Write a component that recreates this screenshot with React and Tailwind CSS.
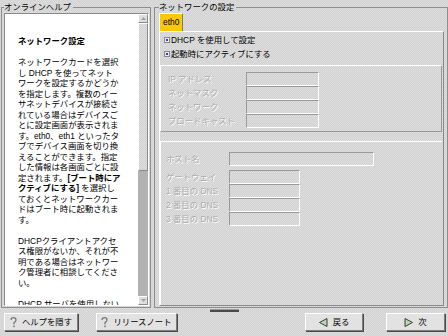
const helpLines1 = [
  'ネットワークカードを選択',
  'し DHCP を使ってネット',
  'ワークを設定するかどうか',
  'を指定します。複数のイー',
  'サネットデバイスが接続さ',
  'れている場合はデバイスご',
  'とに設定画面が表示されま',
  'す。eth0、eth1 といったタ',
  'ブでデバイス画面を切り換',
  'えることができます。指定',
  'した情報は各画面ごとに設',
];

const helpLines2 = [
  'ておくとネットワークカー',
  'ドはブート時に起動されま',
  'す。',
];

const helpLines3 = [
  'DHCPクライアントアクセ',
  'ス権限がないか、それが不',
  '明である場合はネットワー',
  'ク管理者に相談してくださ',
  'い。',
];

const stipple = 'bg-[repeating-conic-gradient(#d2d2d2_0%_25%,#dddddd_0%_50%)] bg-[length:2px_2px]';

function HelpIcon() {
  return (
    <svg width="7" height="11" viewBox="0 0 7 11">
      <path d="M1 3 Q1 0.7 3.5 0.7 Q6 0.7 6 3 Q6 4.6 4 5.6 L4 7.5" fill="none" stroke="#7a7a7a" strokeWidth="1.3" />
      <rect x="3.2" y="8.6" width="1.6" height="1.6" fill="#7a7a7a" />
    </svg>
  );
}

function Arrow({ dir }) {
  return (
    <svg width="9" height="9" viewBox="0 0 9 9">
      <polygon
        points={dir === 'left' ? '8,0.5 8,8.5 0.5,4.5' : '1,0.5 1,8.5 8.5,4.5'}
        fill="#b8d8b0"
        stroke="#3c3c3c"
        strokeWidth="1"
      />
    </svg>
  );
}

function Button({ children, className }) {
  return (
    <button className={`h-[18px] flex items-center justify-center gap-[5px] bg-[#e2e2e2] border border-t-white border-l-white border-b-[#7c7c7c] border-r-[#7c7c7c] shadow-[1px_1px_0_#4a4a4a] text-black ${className}`}>
      {children}
    </button>
  );
}

function Check({ label }) {
  return (
    <div className="h-[14px] flex items-center gap-[1px] pl-[4px]">
      <span className="w-[6px] h-[6px] border border-[#8a8a8a] bg-[#e8e8f4] flex items-center justify-center">
        <span className="w-[2px] h-[2px] bg-[#2c44b8]" />
      </span>
      <span className="text-black">{label}</span>
    </div>
  );
}

function Field({ label, w, labelW }) {
  return (
    <div className="h-[14px] flex items-center">
      <span className={`${labelW} text-[#adadad] [text-shadow:1px_1px_0_#fff] whitespace-nowrap`}>{label}</span>
      <span className={`${w} h-[14px] border border-t-[#9a9a9a] border-l-[#9a9a9a] border-b-white border-r-white`} />
    </div>
  );
}

export default function App() {
  return (
    <div className={`w-[448px] h-[336px] overflow-hidden flex flex-col text-[8.4px] leading-[10.5px] font-[family-name:'Liberation_Sans','Noto_Sans_CJK_JP',sans-serif] ${stipple}`}>
      <div className="flex gap-[3px] pl-[1px]">
        {/* オンラインヘルプ */}
        <fieldset className="mt-[1px] w-[148px] h-[307px] border border-[#8e8e8e] pl-[2px] pr-[1px] pb-[1px] flex flex-col">
          <legend className="leading-[12px] pr-[2px] text-black">オンラインヘルプ</legend>
          <div className="h-[293px] flex border border-t-[#8a8a8a] border-l-[#8a8a8a] border-b-white border-r-white">
            <div className="w-[133px] bg-white overflow-hidden pl-[13px] pt-[22px] text-black whitespace-nowrap">
              <div className="font-bold">ネットワーク設定</div>
              <div className="h-[10.5px]" />
              {helpLines1.map((l) => <div key={l}>{l}</div>)}
              <div>定されます。<b>[ブート時にア</b></div>
              <div><b>クティブにする]</b> を選択し</div>
              {helpLines2.map((l) => <div key={l}>{l}</div>)}
              <div className="h-[10.5px]" />
              {helpLines3.map((l) => <div key={l}>{l}</div>)}
              <div className="h-[10.5px]" />
              <div>DHCP サーバを使用しない</div>
              <div>場合は静的に情報を入力</div>
            </div>
            <div className="w-[10px] flex flex-col bg-[#b2b2b2]">
              <div className="h-[9px] bg-[#dedede] border border-t-white border-l-white border-b-[#8a8a8a] border-r-[#8a8a8a] flex items-center justify-center">
                <svg width="5" height="3" viewBox="0 0 5 3"><polygon points="2.5,0 5,3 0,3" fill="#a0a0a0" /></svg>
              </div>
              <div className={`h-[148px] border border-t-white border-l-white border-b-[#8a8a8a] border-r-[#8a8a8a] ${stipple}`} />
              <div className="flex-1" />
              <div className="h-[9px] bg-[#dedede] border border-t-white border-l-white border-b-[#8a8a8a] border-r-[#8a8a8a] flex items-center justify-center">
                <svg width="5" height="3" viewBox="0 0 5 3"><polygon points="0,0 5,0 2.5,3" fill="#a0a0a0" /></svg>
              </div>
            </div>
          </div>
        </fieldset>

        {/* ネットワークの設定 */}
        <fieldset className="mt-[1px] w-[294px] h-[307px] border border-[#8e8e8e] pl-[4px] pr-[3px] pb-[1px] flex flex-col">
          <legend className="leading-[12px] pr-[2px] text-black">ネットワークの設定</legend>
          <div className="flex">
            <div className="w-[24px] h-[18px] bg-[#fcc800] border border-t-white border-l-white border-r-[#7c7c7c] border-b-0 pl-[3px] flex items-center text-black">eth0</div>
          </div>
          <div className="flex-1 flex flex-col border border-t-white border-l-white border-r-[#8a8a8a] border-b-[#8a8a8a] pt-[1px]">
            <Check label="DHCP を使用して設定" />
            <Check label="起動時にアクティブにする" />
            <div className="mt-[4px] mr-[1px] h-[67px] border border-t-white border-l-white border-b-[#9a9a9a] border-r-[#9a9a9a] pl-[7px] pt-[6px] flex flex-col">
              <Field label="IP アドレス" labelW="w-[78px]" w="w-[73px]" />
              <Field label="ネットマスク" labelW="w-[78px]" w="w-[73px]" />
              <Field label="ネットワーク" labelW="w-[78px]" w="w-[73px]" />
              <Field label="ブロードキャスト" labelW="w-[78px]" w="w-[73px]" />
            </div>
            <div className="mt-[9px] mr-[1px] flex-1 border-t border-l border-t-white border-l-white pl-[5px] pt-[10px] flex flex-col">
              <Field label="ホスト名" labelW="w-[63px]" w="w-[145px]" />
              <div className="h-[4px]" />
              <Field label="ゲートウェイ" labelW="w-[63px]" w="w-[71px]" />
              <Field label="1 番目の DNS" labelW="w-[63px]" w="w-[71px]" />
              <Field label="2 番目の DNS" labelW="w-[63px]" w="w-[71px]" />
              <Field label="3 番目の DNS" labelW="w-[63px]" w="w-[71px]" />
            </div>
          </div>
        </fieldset>
      </div>

      {/* pane handle */}
      <div className="h-[3px] pl-[210px] mt-[1px]">
        <div className="w-[29px] h-[3px] bg-[#4a4a4a] border-t border-[#9a9a9a]" />
      </div>

      {/* bottom buttons */}
      <div className="flex items-center pl-[4px] pr-[3px] mt-[1px]">
        <Button className="w-[74px]"><HelpIcon /><span>ヘルプを隠す</span></Button>
        <Button className="w-[81px] ml-[18px]"><HelpIcon /><span>リリースノート</span></Button>
        <Button className="w-[58px] ml-auto"><Arrow dir="left" /><span>戻る</span></Button>
        <Button className="w-[59px] ml-[23px]"><Arrow dir="right" /><span>次</span></Button>
      </div>
    </div>
  );
}
